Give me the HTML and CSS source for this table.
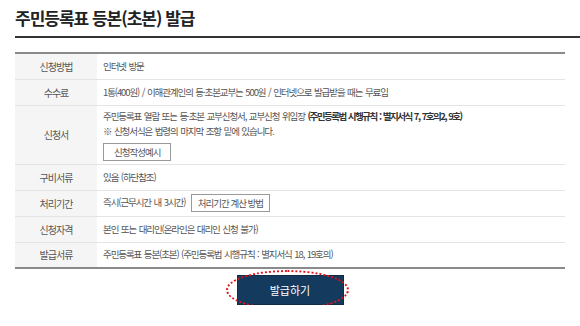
FILE: index.html
```html
<!DOCTYPE html>
<html lang="ko">
<head>
    <meta charset="UTF-8">
    <meta name="viewport" content="width=device-width, initial-scale=1.0">
    <title>주민등록표 등본(초본) 발급</title>
    <link rel="stylesheet" href="styles.css">
</head>
<body>

    <div class="page">

        <h2 class="pagetitle">주민등록표 등본(초본) 발급</h2>

        <table class="infotable">
            <tr>
                <th>신청방법</th>
                <td>인터넷 방문</td>
            </tr>
            <tr>
                <th>수수료</th>
                <td>1통(400원) / 이해관계인의 등·초본교부는 500원 / 인터넷으로 발급받을 때는 무료임</td>
            </tr>
            <tr class="tallrow">
                <th>신청서</th>
                <td>
                    주민등록표 열람 또는 등·초본 교부신청서, 교부신청 위임장 <b>(주민등록법 시행규칙 : 별지서식 7, 7호의2, 9호)</b><br>
                    ※ 신청서식은 법령의 마지막 조항 밑에 있습니다.
                    <button class="smallbtn block">신청작성예시</button>
                </td>
            </tr>
            <tr>
                <th>구비서류</th>
                <td>있음 (하단참조)</td>
            </tr>
            <tr>
                <th>처리기간</th>
                <td>즉시(근무시간 내 3시간) <button class="smallbtn inline">처리기간 계산 방법</button></td>
            </tr>
            <tr>
                <th>신청자격</th>
                <td>본인 또는 대리인(온라인은 대리인 신청 불가)</td>
            </tr>
            <tr>
                <th>발급서류</th>
                <td>주민등록표 등본(초본) (주민등록법 시행규칙 : 별지서식 18, 19호의)</td>
            </tr>
        </table>

        <div class="actions">
            <div class="issuewrap">
                <button class="issuebtn">발급하기</button>
                <span class="ring"></span>
            </div>
        </div>

    </div>

</body>
</html>
```

FILE: styles.css
```css
* {
    font-family: 'Noto Sans CJK KR', 'Noto Sans', sans-serif;
    box-sizing: border-box;
    margin: 0;
}

body {
    background-color: #fff;
    color: #555;
}

.page {
    padding: 7px 0 0 15px;
}

.pagetitle {
    font-size: 17px;
    font-weight: bold;
    letter-spacing: -1px;
    color: #222;
    line-height: 22px;
    padding-bottom: 7px;
    border-bottom: 2px solid #333;
}

.infotable {
    width: 550px;
    margin-top: 14px;
    border-collapse: collapse;
    border-top: 2px solid #8a8a8a;
    border-bottom: 2px solid #8a8a8a;
    font-size: 9.5px;
    letter-spacing: -1.1px;
    word-spacing: 1px;
}

.infotable th {
    width: 82px;
    height: 26px;
    background-color: #f5f5f5;
    font-weight: normal;
    font-size: 10px;
    letter-spacing: -1px;
    word-spacing: 0;
    color: #555;
    text-align: center;
    border-bottom: 1px solid #e4e4e4;
}

.infotable td {
    padding: 0 6px;
    line-height: 15px;
    border-bottom: 1px solid #e4e4e4;
}

.infotable b {
    color: #333;
    letter-spacing: -1.5px;
}

.infotable .tallrow td {
    padding: 3px 6px 3px 6px;
}

.smallbtn {
    height: 18px;
    padding: 0 10px;
    font-size: 9.5px;
    letter-spacing: -1px;
    color: #555;
    background-color: #fff;
    border: 1px solid #999;
    vertical-align: middle;
}

.smallbtn.block {
    display: block;
    margin-top: 4px;
}

.smallbtn.inline {
    margin-left: 3px;
    padding: 0 6px;
}

.actions {
    display: flex;
    justify-content: center;
    padding: 6px 15px 0 0;
}

.issuewrap {
    position: relative;
}

.issuebtn {
    display: block;
    width: 107px;
    height: 30px;
    font-size: 11px;
    color: #fff;
    background-color: #143a5e;
    border: 1px solid #0e2c4a;
}

/* red dotted highlight drawn around the button */
.ring {
    position: absolute;
    left: -11px;
    top: -5px;
    width: 123px;
    height: 40px;
    border: 2px dotted #e3141c;
    border-radius: 50%;
}
```
